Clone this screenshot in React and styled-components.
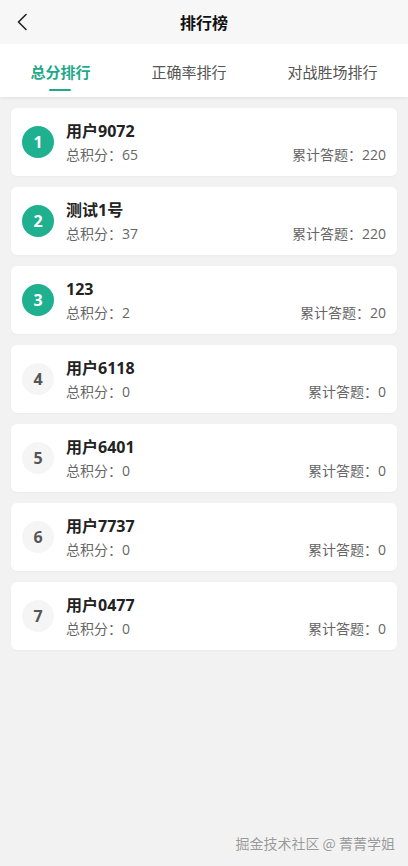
import React, { useState } from 'react';
import styled, { createGlobalStyle } from 'styled-components';

const GlobalStyle = createGlobalStyle`
  html, body {
    margin: 0;
    padding: 0;
    background: #f2f2f2;
    font-family: "Noto Sans CJK SC", "Open Sans", sans-serif;
  }
`;

const Page = styled.div`
  position: relative;
  min-height: 866px;
  background: #f2f2f2;
`;

const NavBar = styled.div`
  height: 44px;
  display: flex;
  align-items: center;
  justify-content: center;
  position: relative;
  background: #f7f7f7;
`;

const BackButton = styled.div`
  position: absolute;
  left: 12px;
  top: 12px;
  width: 20px;
  height: 20px;
  display: flex;
  align-items: center;
  justify-content: center;
`;

const Title = styled.h1`
  margin: 0;
  font-size: 16px;
  font-weight: 700;
  color: #111;
`;

const TabBar = styled.div`
  height: 53px;
  display: flex;
  justify-content: space-around;
  align-items: center;
  background: #fff;
  box-shadow: 0 1px 3px rgba(0, 0, 0, 0.08);
`;

const Tab = styled.div`
  position: relative;
  font-size: 15px;
  line-height: 22px;
  padding-top: 2px;
  color: ${p => (p.$active ? '#1fa98a' : '#555')};
  font-weight: ${p => (p.$active ? 700 : 400)};
  cursor: pointer;

  &::after {
    content: '';
    display: ${p => (p.$active ? 'block' : 'none')};
    position: absolute;
    left: 50%;
    bottom: -8px;
    width: 22px;
    height: 2px;
    margin-left: -11px;
    background: #1fa98a;
    border-radius: 1px;
  }
`;

const List = styled.div`
  display: flex;
  flex-direction: column;
  gap: 11px;
  padding: 11px 11px;
`;

const Card = styled.div`
  height: 68px;
  box-sizing: border-box;
  display: flex;
  align-items: center;
  gap: 12px;
  padding: 0 11px;
  background: #fff;
  border-radius: 6px;
  box-shadow: 0 1px 2px rgba(0, 0, 0, 0.03);
`;

const Badge = styled.div`
  flex: none;
  width: 32px;
  height: 32px;
  border-radius: 50%;
  display: flex;
  align-items: center;
  justify-content: center;
  font-family: "Open Sans", sans-serif;
  font-size: 16px;
  font-weight: 700;
  background: ${p => (p.$top ? '#1fb08f' : '#f5f5f5')};
  color: ${p => (p.$top ? '#fff' : '#555')};
`;

const Info = styled.div`
  flex: 1;
  display: flex;
  flex-direction: column;
  gap: 3px;
`;

const Name = styled.div`
  font-family: "Open Sans", "Noto Sans CJK SC", sans-serif;
  font-size: 16px;
  font-weight: 700;
  color: #222;
  line-height: 22px;
`;

const Stats = styled.div`
  display: flex;
  justify-content: space-between;
  font-family: "Open Sans", "Noto Sans CJK SC", sans-serif;
  font-size: 14px;
  color: #666;
  line-height: 20px;
`;

const Watermark = styled.div`
  position: absolute;
  right: 13px;
  bottom: 13px;
  font-size: 14px;
  line-height: 20px;
  color: #999;
  text-shadow: 0 0 1px #fff;
`;

const tabs = ['总分排行', '正确率排行', '对战胜场排行'];

const users = [
  { name: '用户9072', score: 65, answered: 220 },
  { name: '测试1号', score: 37, answered: 220 },
  { name: '123', score: 2, answered: 20 },
  { name: '用户6118', score: 0, answered: 0 },
  { name: '用户6401', score: 0, answered: 0 },
  { name: '用户7737', score: 0, answered: 0 },
  { name: '用户0477', score: 0, answered: 0 },
];

export default function App() {
  const [active, setActive] = useState(0);

  return (
    <Page>
      <GlobalStyle />
      <NavBar>
        <BackButton>
          <svg width="12" height="18" viewBox="0 0 12 18" fill="none">
            <path d="M10 1.5 L2.5 9 L10 16.5" stroke="#222" strokeWidth="1.6" strokeLinecap="round" strokeLinejoin="round" />
          </svg>
        </BackButton>
        <Title>排行榜</Title>
      </NavBar>
      <TabBar>
        {tabs.map((t, i) => (
          <Tab key={t} $active={i === active} onClick={() => setActive(i)}>
            {t}
          </Tab>
        ))}
      </TabBar>
      <List>
        {users.map((u, i) => (
          <Card key={u.name}>
            <Badge $top={i < 3}>{i + 1}</Badge>
            <Info>
              <Name>{u.name}</Name>
              <Stats>
                <span>总积分：{u.score}</span>
                <span>累计答题：{u.answered}</span>
              </Stats>
            </Info>
          </Card>
        ))}
      </List>
      <Watermark>掘金技术社区 @ 菁菁学姐</Watermark>
    </Page>
  );
}
